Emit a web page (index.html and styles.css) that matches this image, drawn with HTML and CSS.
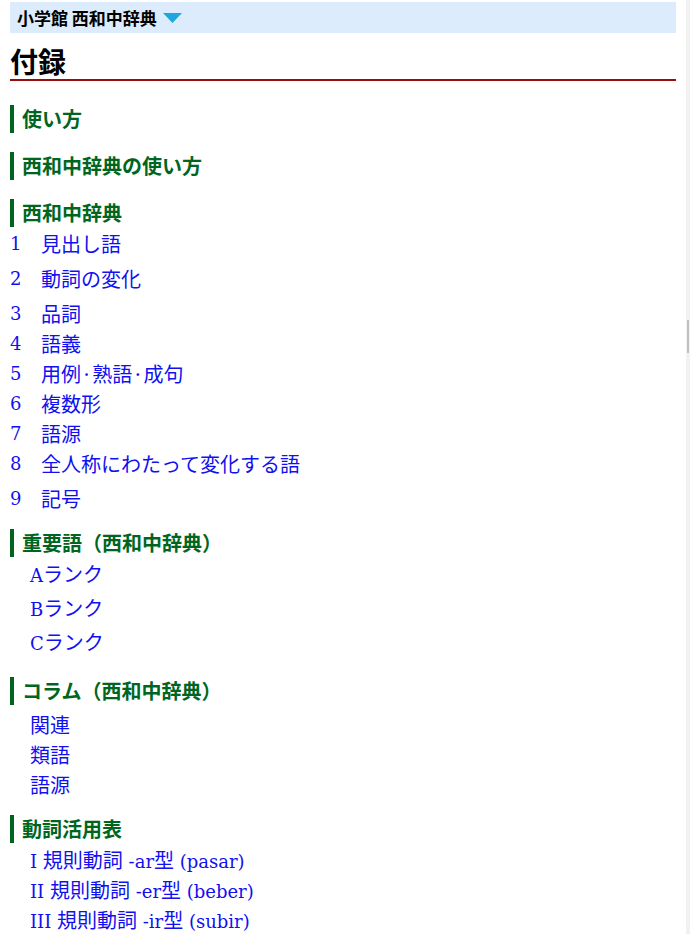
FILE: index.html
```html
<!DOCTYPE html>
<html lang="ja">
<head>
    <meta charset="UTF-8">
    <meta name="viewport" content="width=device-width, initial-scale=1.0">
    <title>付録 - 小学館 西和中辞典</title>
    <link rel="stylesheet" href="styles.css">
</head>
<body>
    <div class="dict-bar">
        <span class="dict-name">小学館 西和中辞典</span>
        <svg class="dict-arrow" width="19" height="10" viewBox="0 0 19 10"><polygon points="0,0 19,0 9.5,10" fill="#1ea7df"/></svg>
    </div>
    <h1 class="page-title">付録</h1>

    <h2 class="sec sec-first">使い方</h2>
    <h2 class="sec">西和中辞典の使い方</h2>
    <h2 class="sec">西和中辞典</h2>
    <ul class="toc">
        <li class="num"><span class="n">1</span><a href="#">見出し語</a></li>
        <li class="num gap"><span class="n">2</span><a href="#">動詞の変化</a></li>
        <li class="num gap"><span class="n">3</span><a href="#">品詞</a></li>
        <li class="num"><span class="n">4</span><a href="#">語義</a></li>
        <li class="num"><span class="n">5</span><a href="#">用例·熟語·成句</a></li>
        <li class="num"><span class="n">6</span><a href="#">複数形</a></li>
        <li class="num"><span class="n">7</span><a href="#">語源</a></li>
        <li class="num"><span class="n">8</span><a href="#">全人称にわたって変化する語</a></li>
        <li class="num gap"><span class="n">9</span><a href="#">記号</a></li>
    </ul>

    <h2 class="sec sec-after">重要語（西和中辞典）</h2>
    <ul class="toc">
        <li class="sub"><a href="#"><span class="lat">A</span>ランク</a></li>
        <li class="sub gap-s"><a href="#"><span class="lat">B</span>ランク</a></li>
        <li class="sub gap-s"><a href="#"><span class="lat">C</span>ランク</a></li>
    </ul>

    <h2 class="sec sec-wide">コラム（西和中辞典）</h2>
    <ul class="toc">
        <li class="sub gap"><a href="#">関連</a></li>
        <li class="sub"><a href="#">類語</a></li>
        <li class="sub"><a href="#">語源</a></li>
    </ul>

    <h2 class="sec sec-after">動詞活用表</h2>
    <ul class="toc">
        <li class="sub"><a href="#"><span class="lat">I </span>規則動詞<span class="lat"> -ar</span>型<span class="lat"> (pasar)</span></a></li>
        <li class="sub"><a href="#"><span class="lat">II </span>規則動詞<span class="lat"> -er</span>型<span class="lat"> (beber)</span></a></li>
        <li class="sub"><a href="#"><span class="lat">III </span>規則動詞<span class="lat"> -ir</span>型<span class="lat"> (subir)</span></a></li>
    </ul>

    <div class="scroll-track"><div class="scroll-thumb"></div></div>
</body>
</html>
```

FILE: styles.css
```css
html {
    overflow: hidden;
}
body {
    margin: 0 14px 0 10px;
    background-color: #fff;
    font-family: "Noto Sans CJK JP", sans-serif;
    color: #000;
}
.dict-bar {
    margin-top: 2px;
    height: 31px;
    background-color: #dcecfc;
    padding-left: 7px;
    display: flex;
    align-items: center;
    gap: 6px;
}
.dict-name {
    font-size: 17px;
    font-weight: bold;
    line-height: 20px;
}
.dict-arrow {
    margin-top: 1px;
}
.page-title {
    margin: 10px 0 0 0;
    font-size: 28px;
    line-height: 36px;
    font-weight: bold;
    border-bottom: 2px solid #9b0c0c;
}
.sec {
    margin: 19px 0 0 0;
    padding-left: 8px;
    border-left: 4px solid #00661f;
    color: #00661f;
    font-size: 20px;
    font-weight: bold;
    line-height: 28px;
}
.sec-first {
    margin-top: 24px;
}
.sec-after {
    margin-top: 15px;
}
.sec-wide {
    margin-top: 20px;
}
.toc {
    list-style: none;
    margin: 2px 0 0 0;
    padding: 0;
}
.toc li {
    height: 30px;
    line-height: 30px;
    font-size: 20px;
    color: #1010f0;
}
.toc a {
    color: #1010f0;
    text-decoration: none;
}
.toc .gap {
    margin-top: 5px;
}
.toc .gap-s {
    margin-top: 4px;
}
.lat {
    font-family: "DejaVu Serif", serif;
    font-size: 18px;
    line-height: 1;
}
.num {
    display: flex;
}
.num .n {
    width: 31px;
    font-family: "DejaVu Serif", serif;
    font-size: 18px;
}
.sub {
    padding-left: 20px;
}
.scroll-track {
    position: fixed;
    top: 0;
    right: 0;
    width: 4px;
    height: 100%;
    background-color: #f1f1f1;
}
.scroll-thumb {
    margin: 320px 0 0 1px;
    width: 2px;
    height: 33px;
    background-color: #c1c1c1;
}
```
